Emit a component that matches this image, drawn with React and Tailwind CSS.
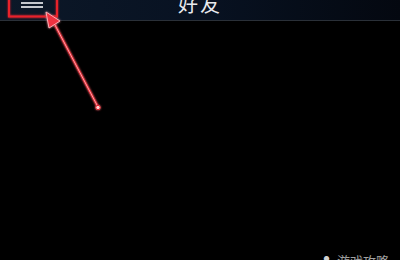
import React from "react";

export default function App() {
  return (
    <div
      className="relative w-[400px] h-[260px] overflow-hidden bg-black"
      style={{ fontFamily: '"Noto Sans CJK SC", "Noto Sans", sans-serif' }}
    >
      {/* header bar */}
      <div className="relative h-[21px] border-b border-[#2a3038] bg-gradient-to-r from-[#0c1828] via-[#081222] to-[#040810] flex items-start justify-center">
        {/* hamburger */}
        <div className="absolute left-[21px] top-[-2px] flex flex-col gap-[2px]">
          <div className="w-[22px] h-[2px] bg-[#c4c8ce]" />
          <div className="w-[22px] h-[2px] bg-[#c4c8ce]" />
          <div className="w-[22px] h-[2px] bg-[#c4c8ce]" />
        </div>
        <span className="mt-[-6px] text-[20px] leading-none text-[#e8eaee] tracking-[2px]">
          好友
        </span>
      </div>

      {/* annotation overlay */}
      <svg
        className="absolute left-0 top-0"
        width="400"
        height="260"
        viewBox="0 0 400 260"
      >
        <defs>
          <filter id="glow" x="-50%" y="-50%" width="200%" height="200%">
            <feGaussianBlur stdDeviation="1.2" result="b" />
            <feMerge>
              <feMergeNode in="b" />
              <feMergeNode in="SourceGraphic" />
            </feMerge>
          </filter>
        </defs>
        <g filter="url(#glow)">
          <rect
            x="9"
            y="-4"
            width="48"
            height="20.5"
            fill="none"
            stroke="#e8202c"
            strokeWidth="2"
          />
          <line
            x1="98"
            y1="107"
            x2="55"
            y2="25"
            stroke="#e8202c"
            strokeWidth="2.4"
            strokeLinecap="round"
          />
          <line
            x1="98"
            y1="107"
            x2="55"
            y2="25"
            stroke="#ffc8cc"
            strokeWidth="0.8"
            strokeLinecap="round"
          />
          <polygon points="46,12 60,21 49,28" fill="#f03040" stroke="#ffb8be" strokeWidth="0.9" strokeLinejoin="round" />
          <circle cx="98" cy="107.5" r="2.2" fill="#ffd0d4" stroke="#e8202c" strokeWidth="1" />
        </g>
      </svg>

      {/* watermark */}
      <div className="absolute left-[320px] top-[254px] flex items-center gap-[4px] text-[13px] leading-none text-[#a0a0a0]">
        <span className="text-[13px] text-[#d0d0d0]">♣</span>
        <span>游戏攻略</span>
      </div>
    </div>
  );
}
